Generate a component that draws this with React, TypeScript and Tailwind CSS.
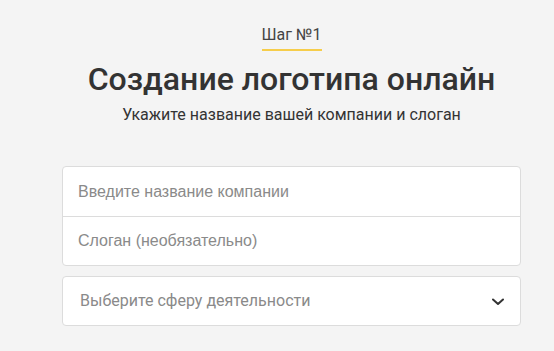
export default function App() {
    return (
        <div className="min-h-[351px] w-full bg-[#f4f4f4] font-['Roboto',sans-serif] overflow-hidden">
            <div className="ml-[62px] w-[459px] flex flex-col items-center pt-[24px]">
                {/* Step label */}
                <div className="text-[16px] leading-[22px] text-[#444]">Шаг №1</div>
                <div className="mt-[3px] h-[2px] w-[60px] bg-[#f6cd4b]" />

                <h1 className="mt-[9px] text-[32px] leading-[38px] font-medium text-[#333] whitespace-nowrap">
                    Создание логотипа онлайн
                </h1>
                <p className="mt-[6px] text-[16px] leading-[22px] text-[#333] whitespace-nowrap">
                    Укажите название вашей компании и слоган
                </p>

                {/* Name + slogan group */}
                <div className="mt-[40px] w-full rounded-[4px] border border-[#dcdcdc] bg-white">
                    <input
                        placeholder="Введите название компании"
                        className="block w-full h-[49px] px-[15px] text-[16px] font-['Liberation_Sans',sans-serif] text-[#333] placeholder:text-[#8a8a8a] outline-none bg-transparent"
                    />
                    <div className="h-px bg-[#dcdcdc]" />
                    <input
                        placeholder="Слоган (необязательно)"
                        className="block w-full h-[48px] px-[15px] text-[16px] font-['Liberation_Sans',sans-serif] text-[#333] placeholder:text-[#8a8a8a] outline-none bg-transparent"
                    />
                </div>

                {/* Industry select */}
                <div className="mt-[10px] w-full h-[50px] rounded-[4px] border border-[#dcdcdc] bg-white flex items-center justify-between pl-[17px] pr-[16px]">
                    <span className="text-[16px] text-[#8a8a8a]">Выберите сферу деятельности</span>
                    <svg width="12" height="8" viewBox="0 0 12 8" fill="none" className="mt-[1px]">
                        <path d="M1 1.5 L6 6 L11 1.5" stroke="#333" strokeWidth="2" strokeLinecap="round" strokeLinejoin="round" />
                    </svg>
                </div>
            </div>
        </div>
    )
}
